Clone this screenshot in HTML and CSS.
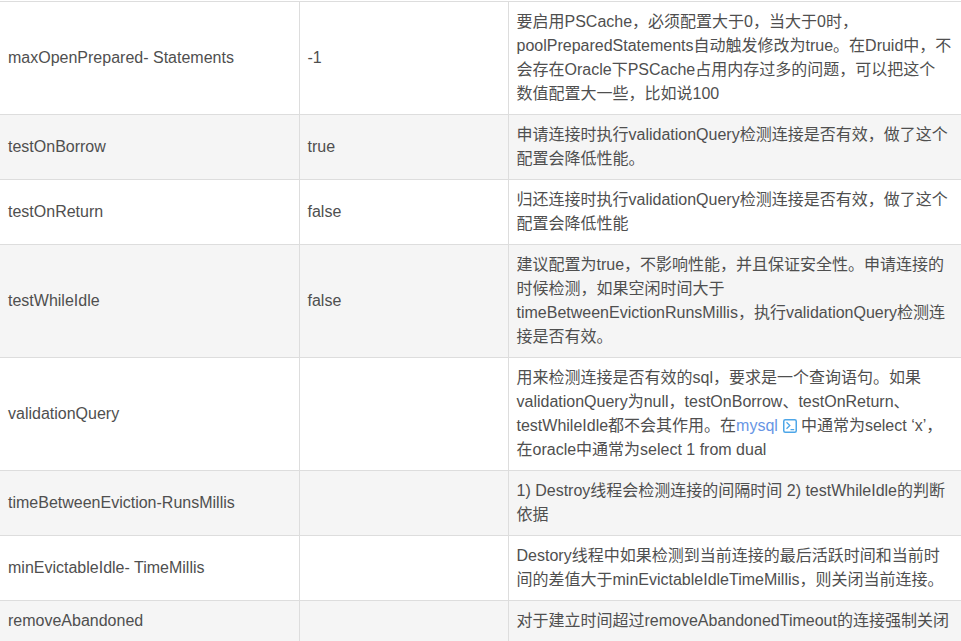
FILE: index.html
```html
<!DOCTYPE html>
<html lang="zh">
<head>
<meta charset="utf-8">
<title>Druid</title>
<link rel="stylesheet" href="styles.css">
</head>
<body>
<table class="config">
<colgroup><col class="c1"><col class="c2"><col class="c3"></colgroup>
<tbody>
<tr><td>maxOpenPrepared- Statements</td><td>-1</td><td>要启用PSCache，必须配置大于0，当大于0时，poolPreparedStatements自动触发修改为true。在Druid中，不会存在Oracle下PSCache占用内存过多的问题，可以把这个<br>数值配置大一些，比如说100</td></tr>
<tr><td>testOnBorrow</td><td>true</td><td>申请连接时执行validationQuery检测连接是否有效，做了这个配置会降低性能。</td></tr>
<tr><td>testOnReturn</td><td>false</td><td>归还连接时执行validationQuery检测连接是否有效，做了这个配置会降低性能</td></tr>
<tr><td>testWhileIdle</td><td>false</td><td>建议配置为true，不影响性能，并且保证安全性。申请连接的时候检测，如果空闲时间大于timeBetweenEvictionRunsMillis，执行validationQuery检测连接是否有效。</td></tr>
<tr><td>validationQuery</td><td></td><td>用来检测连接是否有效的sql，要求是一个查询语句。如果validationQuery为null，testOnBorrow、testOnReturn、testWhileIdle都不会其作用。在<a class="kw" href="#">mysql</a><svg class="ico" viewBox="0 0 14 14" width="14" height="14" aria-hidden="true"><rect x="0.75" y="0.75" width="12.5" height="12.5" rx="1.5" fill="none" stroke="#4da6e8" stroke-width="1.5"/><path d="M3.5 3.2 L6.8 6.5 L3.5 9.8 M7.5 10.7 H11.2" fill="none" stroke="#4da6e8" stroke-width="1.3"/></svg>中通常为select ‘x’，在oracle中通常为select 1 from dual</td></tr>
<tr><td>timeBetweenEviction-RunsMillis</td><td></td><td>1) Destroy线程会检测连接的间隔时间 2) testWhileIdle的判断依据</td></tr>
<tr><td>minEvictableIdle- TimeMillis</td><td></td><td>Destory线程中如果检测到当前连接的最后活跃时间和当前时间的差值大于minEvictableIdleTimeMillis，则关闭当前连接。</td></tr>
<tr><td>removeAbandoned</td><td></td><td>对于建立时间超过removeAbandonedTimeout的连接强制关闭</td></tr>
</tbody>
</table>
</body>
</html>
```

FILE: styles.css
```css
html, body {
  margin: 0;
  height: 641px;
  overflow: hidden;
  background: #fff;
}
body {
  padding-top: 1px;
  font-family: "Liberation Sans", "Noto Sans CJK SC", sans-serif;
  font-size: 16px;
  line-height: 24px;
  color: #4f4f4f;
}
.config {
  border-collapse: collapse;
  table-layout: fixed;
  width: 961px;
}
.c1 { width: 299px; }
.c2 { width: 209px; }
.config td {
  padding: 8px;
  border: 1px solid #ddd;
  vertical-align: middle;
  word-break: break-word;
}
.config td:first-child { border-left: 0; }
.config td:last-child { border-right: 0; }
.config tr:nth-child(even) td { background: #f5f5f5; }
.kw {
  color: #6795e5;
  text-decoration: none;
}
.ico {
  margin: 0 4px 0 5px;
  vertical-align: -2px;
}
```
